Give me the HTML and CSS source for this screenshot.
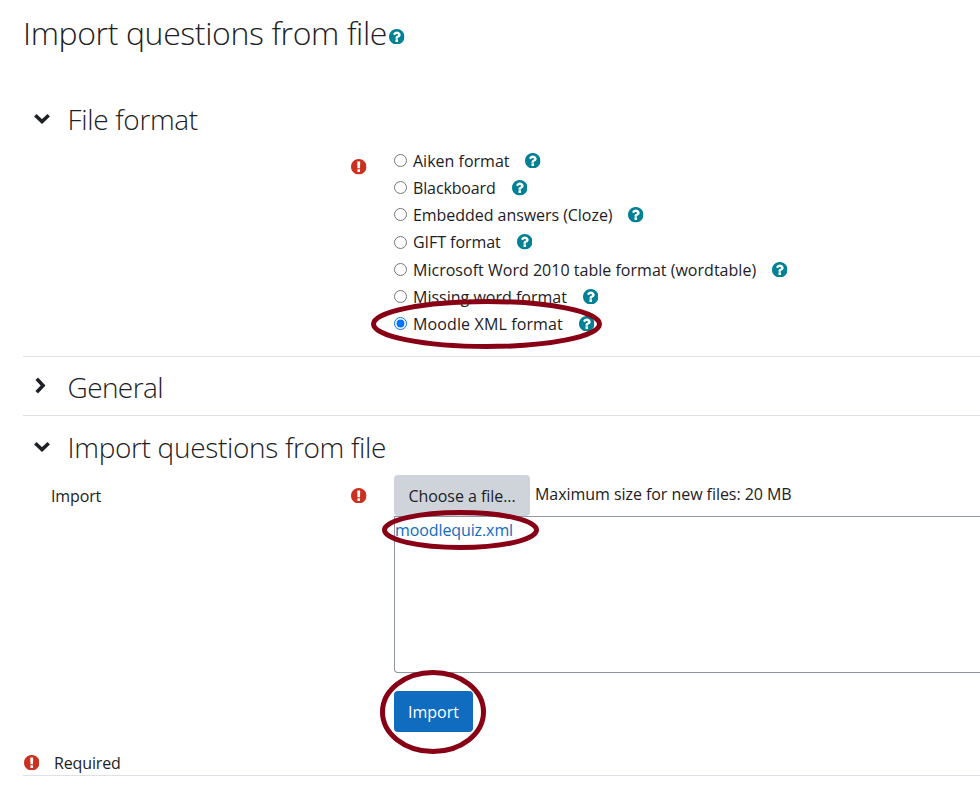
FILE: index.html
```html
<!DOCTYPE html>
<html lang="en">
<head>
<meta charset="utf-8">
<title>Import questions from file</title>
<link rel="stylesheet" href="styles.css">
</head>
<body>
<svg class="defs" aria-hidden="true">
  <symbol id="help" viewBox="128 128 1536 1536"><path d="M1024 1376v-192q0-14-9-23t-23-9h-192q-14 0-23 9t-9 23v192q0 14 9 23t23 9h192q14 0 23-9t9-23zm256-672q0-88-55.5-163t-138.5-116-170-41q-243 0-371 213-15 24 8 42l132 100q7 6 19 6 16 0 25-12 53-68 86-92 34-24 86-24 48 0 85.5 26t37.5 59q0 38-20 61t-68 45q-63 28-115.5 86.5t-52.5 125.5v36q0 14 9 23t23 9h192q14 0 23-9t9-23q0-19 21.5-49.5t54.5-49.5q32-18 49-28.5t46-35 44.5-48 28-60.5 12.5-81zm384 192q0 209-103 385.5t-279.5 279.5-385.5 103-385.5-103-279.5-279.5-103-385.5 103-385.5 279.5-279.5 385.5-103 385.5 103 279.5 279.5 103 385.5z"/></symbol>
  <symbol id="req" viewBox="128 128 1536 1536"><path d="M896 128q209 0 385.5 103t279.5 279.5 103 385.5-103 385.5-279.5 279.5-385.5 103-385.5-103-279.5-279.5-103-385.5 103-385.5 279.5-279.5 385.5-103zm128 1247v-190q0-14-9-23.5t-22-9.5h-192q-13 0-23 10t-10 23v190q0 13 10 23t23 10h192q13 0 22-9.5t9-23.5zm-2-344l18-621q0-12-10-18-10-8-24-8h-220q-14 0-24 8-10 6-10 18l17 621q0 10 10 17.5t24 7.5h185q14 0 23.5-7.5t10.5-17.5z"/></symbol>
  <symbol id="chevron" viewBox="0 0 16 11"><path d="M1.3 2.2 8 8.6l6.7-6.4" fill="none" stroke="#1d2125" stroke-width="3.5"/></symbol>
</svg>
<main class="page">
  <h1 class="title"><span>Import questions from file</span><svg class="icon help"><use href="#help"/></svg></h1>

  <section class="section formats">
    <h2 class="legend"><svg class="chevron"><use href="#chevron"/></svg><span>File format</span></h2>
    <div class="row">
      <div class="label"><svg class="icon req"><use href="#req"/></svg></div>
      <div class="options">
        <label class="option"><input type="radio" name="format"><span>Aiken format</span><svg class="icon help"><use href="#help"/></svg></label>
        <label class="option"><input type="radio" name="format"><span class="tight">Blackboard</span><svg class="icon help"><use href="#help"/></svg></label>
        <label class="option"><input type="radio" name="format"><span class="snug">Embedded answers (Cloze)</span><svg class="icon help"><use href="#help"/></svg></label>
        <label class="option"><input type="radio" name="format"><span class="snug">GIFT format</span><svg class="icon help"><use href="#help"/></svg></label>
        <label class="option"><input type="radio" name="format"><span class="loose">Microsoft Word 2010 table format (wordtable)</span><svg class="icon help"><use href="#help"/></svg></label>
        <label class="option"><input type="radio" name="format"><span>Missing word format</span><svg class="icon help"><use href="#help"/></svg></label>
        <label class="option"><input type="radio" name="format" checked><span class="wide">Moodle XML format</span><svg class="icon help"><use href="#help"/></svg></label>
      </div>
    </div>
  </section>

  <section class="section general">
    <h2 class="legend"><svg class="chevron closed"><use href="#chevron"/></svg><span>General</span></h2>
  </section>

  <section class="section upload">
    <h2 class="legend"><svg class="chevron"><use href="#chevron"/></svg><span>Import questions from file</span></h2>
    <div class="row">
      <div class="label"><span class="tight">Import</span><svg class="icon req"><use href="#req"/></svg></div>
      <div class="picker">
        <div class="picker-bar"><button class="btn choose" type="button"><span class="snug">Choose a file...</span></button><span class="limit snug">Maximum size for new files: 20 MB</span></div>
        <div class="dropbox"><a class="file">moodlequiz.xml</a></div>
        <button class="btn submit" type="button">Import</button>
      </div>
    </div>
    <div class="required"><svg class="icon req"><use href="#req"/></svg><span class="tight">Required</span></div>
  </section>
</main>
<svg class="marks" viewBox="0 0 980 789" aria-hidden="true">
  <ellipse cx="486.5" cy="324" rx="113" ry="22.5"/>
  <ellipse cx="460.5" cy="530" rx="76" ry="17.5"/>
  <ellipse cx="433" cy="712" rx="50.5" ry="39.5"/>
</svg>
</body>
</html>
```

FILE: styles.css
```css
* { box-sizing: border-box; }
body {
  margin: 0;
  height: 789px;
  overflow: hidden;
  position: relative;
  background: #fff;
  color: #1d2125;
  font: 16px/27.2px "Open Sans", "Noto Sans", sans-serif;
}
.defs { position: absolute; width: 0; height: 0; }
.page { padding-left: 23px; white-space: nowrap; }
.icon { width: 15.5px; height: 15.5px; flex: none; display: block; }
.help { fill: #008196; }
.req { fill: #ca3120; }
.tight { letter-spacing: -0.13px; }
.snug { letter-spacing: -0.05px; }
.loose { letter-spacing: 0.02px; }
.wide { letter-spacing: 0.13px; }
h1, h2 { margin: 0; font-weight: 300; }
.title { display: flex; align-items: center; height: 95px; padding-bottom: 29px; font-size: 32px; line-height: 48px; letter-spacing: -0.38px; }
.title .icon { margin: 7px 0 0 2.4px; }
.section { border-bottom: 1px solid #dee2e6; }
.legend { display: flex; align-items: center; font-size: 28px; line-height: 42px; height: 48px; letter-spacing: -0.33px; }
.legend .chevron { width: 16px; height: 11px; margin: 0 18px 2px 10.5px; }
.legend .closed { margin: 0 19.5px 3px 9px; transform: rotate(-90deg); }
.row { display: grid; grid-template-columns: 371px 1fr; }
.label { display: flex; justify-content: space-between; padding: 0 27.5px 0 28px; }
.label .req { margin-left: auto; }
.label span { padding-top: 2px; }
.formats { height: 262px; }
.formats .row { padding-top: 4px; }
.formats .label { padding-top: 12px; }
.option { display: flex; align-items: center; height: 27.2px; }
.option span { padding-top: 1.6px; }
.option input { width: 13px; height: 13px; margin: 0 6px 0 0; flex: none; }
.option .icon { margin-left: 16px; }
.general { height: 59px; padding-top: 6px; }
.general .legend { letter-spacing: -0.6px; }
.upload { height: 360px; padding-top: 7px; }
.upload .label { align-items: center; height: 41px; }
.upload .row { padding-top: 4px; }
.picker-bar { display: flex; height: 41px; }
.btn { border: 0; height: 41px; border-radius: 4px; padding: 2px 0 0; font: inherit; color: #1d2125; display: block; text-align: center; }
.choose { width: 136px; background: #ced4da; }
.limit { margin: 6px 0 0 5px; }
.dropbox { height: 157px; border: 1px solid #8f959e; border-right: 0; border-radius: 0 0 0 4px; }
.file { color: #0f6cbf; letter-spacing: -0.1px; }
.submit { width: 79px; margin-top: 18px; background: #0f6cbf; color: #fff; }
.required { display: flex; align-items: center; gap: 15px; margin: 16px 0 0 0.5px; }
.required span { padding-top: 2px; }
.marks { position: absolute; left: 0; top: 0; width: 980px; height: 789px; pointer-events: none; }
.marks ellipse { fill: none; stroke: #880015; stroke-width: 5; }
```
